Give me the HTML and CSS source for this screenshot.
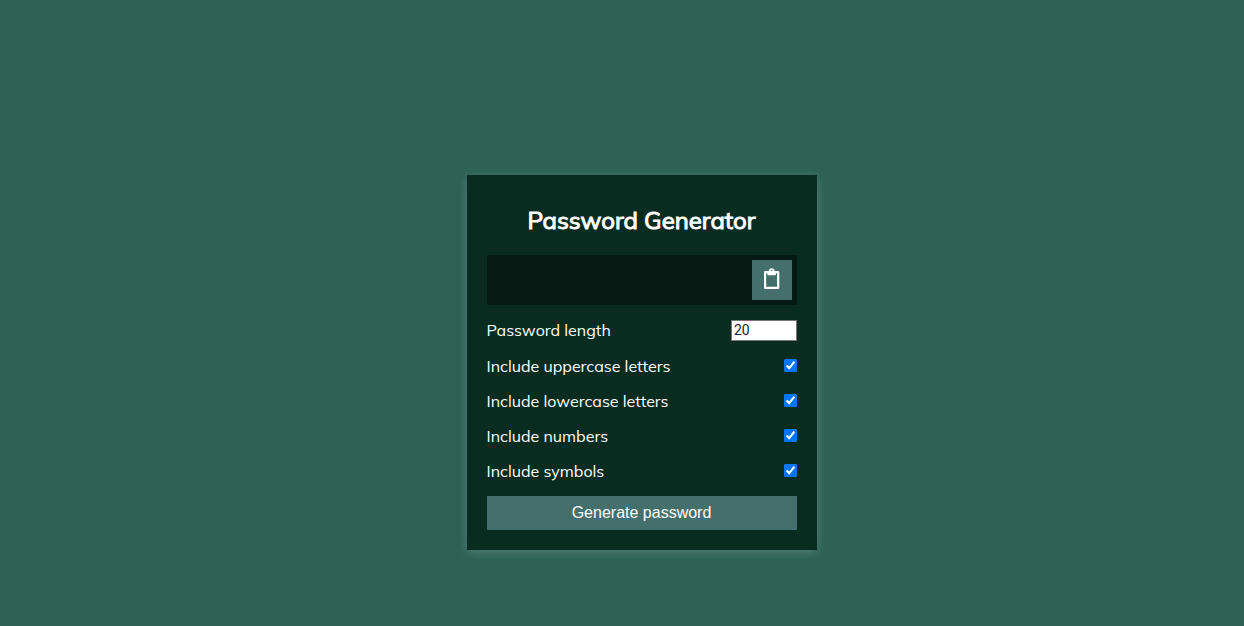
FILE: index.html
```html
<!DOCTYPE html>
<html lang="en">
<head>
<meta charset="utf-8">
<title>Password Generator</title>
<link rel="stylesheet" href="styles.css">
</head>
<body>
<main class="container">
  <h2 class="title">Password Generator</h2>
  <div class="result-container">
    <span class="result"></span>
    <button class="btn btn-copy" aria-label="Copy password">
      <svg class="clipboard" width="16" height="22" viewBox="0 0 16 22">
        <path fill="none" stroke="#fff" stroke-width="2.2" stroke-linejoin="round" d="M1.1 4.2H14.2V19.9H1.1Z"/>
        <path fill="#fff" fill-rule="evenodd" d="M3.3 3H4.9A2.8 2.8 0 0 1 10.5 3H12V6Q12 7.3 10.7 7.3H4.7Q3.3 7.3 3.3 6ZM7.7 2.1A.9 .9 0 1 0 7.7 3.9A.9 .9 0 1 0 7.7 2.1Z"/>
      </svg>
    </button>
  </div>
  <div class="settings">
    <div class="setting"><label class="label" for="length">Password length</label><input class="length" type="number" id="length" min="4" max="20" value="20"></div>
    <div class="setting"><label class="label" for="uppercase">Include uppercase letters</label><input class="check" type="checkbox" id="uppercase" checked></div>
    <div class="setting"><label class="label" for="lowercase">Include lowercase letters</label><input class="check" type="checkbox" id="lowercase" checked></div>
    <div class="setting"><label class="label" for="numbers">Include numbers</label><input class="check" type="checkbox" id="numbers" checked></div>
    <div class="setting"><label class="label" for="symbols">Include symbols</label><input class="check" type="checkbox" id="symbols" checked></div>
  </div>
  <button class="btn btn-large">Generate password</button>
</main>
</body>
</html>
```
FILE: styles.css
```css
* {
  box-sizing: border-box;
}

body {
  display: flex;
  justify-content: center;
  align-items: flex-start;
  min-height: 100vh;
  margin: 0;
  padding: 175px 0 0 40px;
  overflow: hidden;
  background: #2d6154;
  color: #fff;
  font-family: Muli, Mulish, Lato, sans-serif;
  font-size: 16px;
}

.container {
  width: 350px;
  height: 375px;
  padding: 20px;
  background: #092c21;
  box-shadow: 0 2px 10px rgba(255, 255, 255, 0.2);
}

.title {
  margin: 10px 0 20px;
  padding-right: 1px;
  font-size: 24px;
  line-height: 31px;
  height: 30px;
  font-weight: 400;
  -webkit-text-stroke: 1px #fff;
  text-align: center;
  white-space: nowrap;
}

.result-container {
  display: flex;
  justify-content: flex-end;
  align-items: center;
  height: 50px;
  padding: 5px;
  background: #051a13;
}

.result {
  flex: 1;
}

.btn {
  border: none;
  background: #456f6c;
  color: #fff;
  font-family: Arial, "Liberation Sans", sans-serif;
  font-size: 16px;
}

.btn-copy {
  display: flex;
  justify-content: center;
  align-items: flex-start;
  width: 40px;
  height: 40px;
  padding: 8px 0 0;
}

.setting {
  display: flex;
  justify-content: space-between;
  align-items: center;
  height: 20px;
  margin: 15px 0;
  white-space: nowrap;
}

.setting:first-child {
  height: 21px;
}

.setting:first-child .label {
  margin-bottom: 2px;
}

.label {
  margin-left: -0.5px;
}

.length {
  width: 66px;
  height: 21px;
  margin: 0;
  padding: 0 2px 1px;
  border: 1px solid #767676;
  background: #fff;
  color: #222;
  font-family: Roboto, sans-serif;
  font-size: 14px;
}

.check {
  width: 13px;
  height: 13px;
  margin: 0 0 1px;
}

.btn-large {
  display: block;
  width: 100%;
  height: 34px;
  padding: 0 1px 1px 0;
}
```
